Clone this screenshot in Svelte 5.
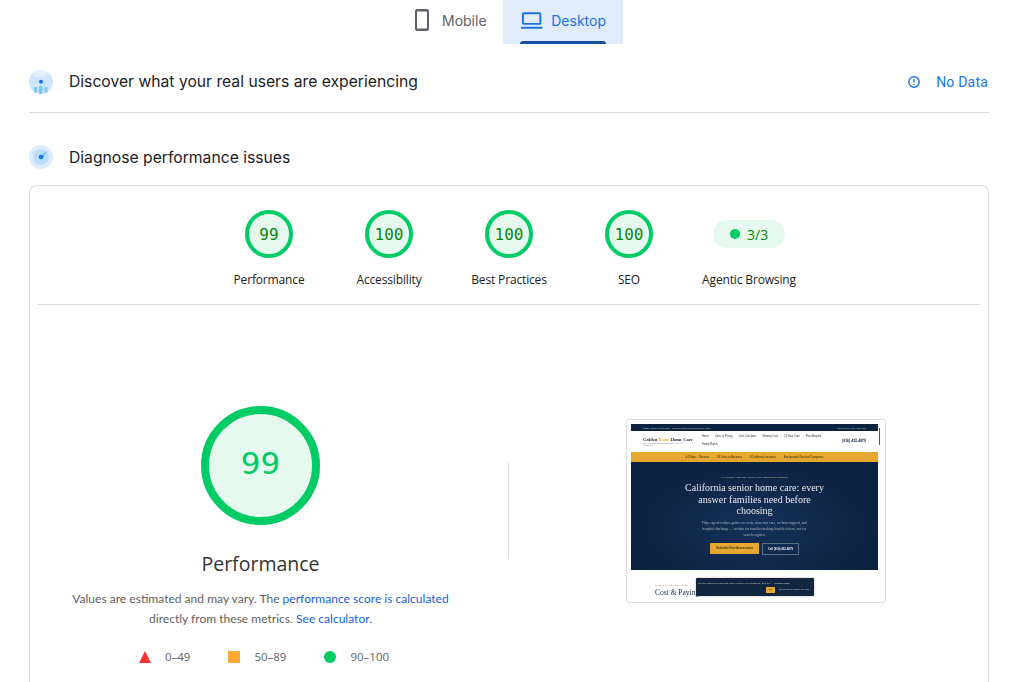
<script>
  const scores = [
    { label: 'Performance', value: '99' },
    { label: 'Accessibility', value: '100' },
    { label: 'Best Practices', value: '100' },
    { label: 'SEO', value: '100' }
  ];
  const navLinks = ['Home', 'Costs & Pricing', 'Cost Calculator', 'Memory Care', '24 Hour Care', 'Post-Hospital', 'Family Rights'];
  const trust = ['4.9 Stars · Reviews', '18 Years in Business', '8 California Locations', 'Background Checked Caregivers'];
</script>

<main class="page">
  <nav class="tabs">
    <div class="tab">
      <svg width="24" height="24" viewBox="0 0 24 24" fill="#5f6368"><path d="M7 1h10a2 2 0 0 1 2 2v18a2 2 0 0 1-2 2H7a2 2 0 0 1-2-2V3a2 2 0 0 1 2-2zm0 2.500v17h10v-17H7z" /></svg>
      <span>Mobile</span>
    </div>
    <div class="tab active">
      <svg width="24" height="24" viewBox="0 0 24 24" fill="#1a73e8"><path d="M4 4h16a2 2 0 0 1 2 2v9a2 2 0 0 1-2 2H4a2 2 0 0 1-2-2V6a2 2 0 0 1 2-2zm0 2v9h16V6H4zM1 19h22v2H1z" /></svg>
      <span>Desktop</span>
    </div>
  </nav>

  <section class="head first">
    <svg class="head-icon" width="24" height="24" viewBox="0 0 24 24">
      <circle cx="12" cy="12" r="12" fill="#cfe4fd" />
      <path d="M4 5a12 12 0 0 1 9-5 12 12 0 0 1 7 3.500c-3 0-4 3-8 3-3 0-4 2-8-1.500z" fill="#e6f1fe" />
      <circle cx="12" cy="11.700" r="2" fill="#1a73e8" />
      <rect x="5" y="17" width="3" height="5.500" rx="1" fill="#7cc8fa" />
      <rect x="10" y="16" width="3.500" height="8" rx="1" fill="#7cc8fa" />
      <rect x="15.500" y="17" width="3" height="5.500" rx="1" fill="#7cc8fa" />
    </svg>
    <h2>Discover what your real users are experiencing</h2>
    <div class="no-data">
      <svg width="14" height="14" viewBox="0 0 14 14" fill="none" stroke="#1a73e8" stroke-width="1.4">
        <circle cx="7" cy="7" r="5.200" />
        <path d="M7 4v3.600M7 9v1.200" />
      </svg>
      <span>No Data</span>
    </div>
  </section>

  <section class="head second">
    <svg class="head-icon" width="24" height="24" viewBox="0 0 24 24">
      <circle cx="12" cy="12" r="12" fill="#deedfe" />
      <circle cx="12" cy="12" r="8" fill="#bcdcfe" />
      <path d="M12 14.800 9.500 12 18.500 5.500 14.800 13z" fill="#86c2fb" />
      <circle cx="12" cy="12" r="2.300" fill="#1a73e8" />
    </svg>
    <h2>Diagnose performance issues</h2>
  </section>

  <section class="card">
    <div class="scores">
      {#each scores as s}
        <div class="score">
          <div class="ring">{s.value}</div>
          <span class="score-label">{s.label}</span>
        </div>
      {/each}
      <div class="score">
        <div class="pill-wrap">
          <div class="pill"><i></i>3/3</div>
        </div>
        <span class="score-label">Agentic Browsing</span>
      </div>
    </div>

    <div class="detail">
      <div class="summary">
        <div class="big-ring"><span>99</span></div>
        <h3>Performance</h3>
        <p>Values are estimated and may vary. The <a href="#calc">performance score is calculated</a> directly from these metrics. <a href="#calc">See calculator.</a></p>
        <div class="legend">
          <div class="legend-item">
            <svg width="12" height="12" viewBox="0 0 12 12"><path d="M6 0l6 12H0z" fill="#ff3333" /></svg>
            <span>0–49</span>
          </div>
          <div class="legend-item">
            <span class="sq"></span>
            <span>50–89</span>
          </div>
          <div class="legend-item">
            <span class="dot"></span>
            <span>90–100</span>
          </div>
        </div>
      </div>

      <div class="rule"></div>

      <div class="shot-col">
        <div class="shot">
          <div class="site">
            <div class="site-top"><span>Family Owned &amp; Operated · Serving California Seniors Since 2006</span><span>Call us free: (916) 432-4879</span></div>
            <div class="site-nav">
              <div class="brand">
                <b>Golden <em>Years</em> Home Care</b>
                <small>Non-medical senior home care across California</small>
              </div>
              <div class="links">
                {#each navLinks as l}<span>{l}</span>{/each}
              </div>
              <div class="phone"><small>Talk to a care advisor</small><b>(916) 432-4879</b></div>
            </div>
            <div class="site-trust">
              {#each trust as t}<span>{t}</span>{/each}
            </div>
            <div class="site-hero">
              <div class="eyebrow">CALIFORNIA SENIOR HOME CARE RESOURCE CENTER</div>
              <div class="title">California senior home care: every answer families need before choosing</div>
              <div class="sub">Fifty expert-written guides on costs, dementia care, no-hour support, and hospital discharge — written for families making hard decisions, not for search engines.</div>
              <div class="cta">
                <span class="cta-main">Schedule Free Assessment</span>
                <span class="cta-alt">Call (916) 432-4879</span>
              </div>
            </div>
            <div class="site-next">
              <div class="next-eyebrow">COST &amp; PAYING FOR CARE</div>
              <div class="next-title">Cost &amp; Paying for Care</div>
            </div>
            <div class="cookie">
              <div class="cookie-text">We use cookies for analytics and to improve our website(s). See our <u>Privacy Policy</u></div>
              <div class="cookie-btns"><span class="ok">OK</span><span class="nosell">Do not Sell or Share My Info</span></div>
            </div>
            <div class="scroll"></div>
          </div>
        </div>
      </div>
    </div>
  </section>
</main>

<style>
  :global(body) {
    margin: 0;
    background: #fff;
    overflow: hidden;
  }

  .page {
    width: 960px;
    height: 682px;
    margin: 0 0 0 29px;
    overflow: hidden;
    font-family: "Open Sans", "Liberation Sans", sans-serif;
    color: #202124;
  }

  .tabs {
    display: flex;
    justify-content: center;
    height: 44px;
    margin-left: 8px;
  }

  .tab {
    display: flex;
    align-items: center;
    gap: 8px;
    width: 100px;
    box-sizing: border-box;
    padding: 0 7px 4px;
    font: 400 14px Inter, sans-serif;
    color: #5f6368;
  }

  .tab.active {
    position: relative;
    width: 120px;
    padding: 0 17px 4px;
    background: #e1ecfb;
    color: #1a73e8;
  }

  .tab.active::after {
    content: "";
    position: absolute;
    left: 17px;
    right: 17px;
    bottom: 0;
    height: 3px;
    border-radius: 3px 3px 0 0;
    background: #174ea6;
  }

  .head {
    display: flex;
    align-items: center;
    gap: 16px;
  }

  .head.first {
    height: 59px;
    padding: 8px 0 1px;
    border-bottom: 1px solid #dadce0;
    box-sizing: content-box;
  }

  .head.second {
    height: 72px;
    padding-top: 16px;
    box-sizing: border-box;
  }

  .head-icon {
    flex: none;
  }

  h2 {
    margin: 0;
    font: 400 15.7px Inter, sans-serif;
    color: #202124;
  }

  .no-data {
    margin-left: auto;
    margin-right: 1px;
    display: flex;
    align-items: center;
    gap: 15px;
    font: 400 14px Roboto, sans-serif;
    letter-spacing: 0.2px;
    color: #1a73e8;
  }

  .card {
    height: 497px;
    box-sizing: border-box;
    padding: 0 8px;
    border: 1px solid #dadce0;
    border-bottom: none;
    border-radius: 8px 8px 0 0;
  }

  .scores {
    display: flex;
    justify-content: center;
    height: 119px;
    box-sizing: border-box;
    padding-top: 24px;
    border-bottom: 1px solid #dadce0;
  }

  .score {
    width: 120px;
    display: flex;
    flex-direction: column;
    align-items: center;
  }

  .ring {
    width: 48px;
    height: 48px;
    box-sizing: border-box;
    border: 4px solid #00cc66;
    border-radius: 50%;
    background: #e5f9ef;
    display: flex;
    align-items: center;
    justify-content: center;
    font: 16px "DejaVu Sans Mono", "Liberation Mono", monospace;
    color: #0a8a0a;
  }

  .pill-wrap {
    height: 48px;
    display: flex;
    align-items: center;
  }

  .pill {
    display: flex;
    align-items: center;
    gap: 7px;
    width: 72px;
    height: 28px;
    box-sizing: border-box;
    padding-left: 17px;
    border-radius: 14px;
    background: #e5f9ef;
    font: 14px "Open Sans", sans-serif;
    color: #0a8a0a;
  }

  .pill i {
    width: 10px;
    height: 10px;
    border-radius: 50%;
    background: #00cc66;
  }

  .score-label {
    margin-top: 12px;
    font: 500 12px "Open Sans", sans-serif;
    letter-spacing: -0.15px;
    line-height: 20px;
    color: #202124;
  }

  .detail {
    display: flex;
    align-items: flex-start;
  }

  .summary {
    flex: none;
    width: 445px;
    display: flex;
    flex-direction: column;
    align-items: center;
    padding-top: 101px;
  }

  .big-ring {
    width: 119px;
    height: 119px;
    box-sizing: border-box;
    border: 8px solid #00cc66;
    border-radius: 50%;
    background: #e5f9ef;
    display: flex;
    align-items: center;
    justify-content: center;
    font: 31px "DejaVu Sans", sans-serif;
    color: #00cc66;
  }

  .big-ring span {
    padding-bottom: 5px;
  }

  h3 {
    margin: 25px 0 0;
    font: 400 19.5px "Open Sans", sans-serif;
    line-height: 28px;
    color: #333;
  }

  p {
    width: 400px;
    margin: 11px 0 0;
    text-align: center;
    font: 12.05px/20px Lato, sans-serif;
    color: #5f5f5f;
  }

  a {
    color: #1a5fdc;
    text-decoration: none;
  }

  .legend {
    display: flex;
    gap: 38px;
    margin: 18px 0 0 7px;
    font: 11.5px "Open Sans", sans-serif;
    color: #5f6368;
  }

  .legend-item {
    display: flex;
    align-items: center;
    gap: 14px;
    line-height: 20px;
  }

  .sq {
    width: 12px;
    height: 12px;
    background: #ffa933;
  }

  .dot {
    width: 12px;
    height: 12px;
    border-radius: 50%;
    background: #00cc66;
  }

  .rule {
    flex: none;
    width: 1px;
    height: 96px;
    margin: 158px 0 0 25px;
    background: #dadce0;
  }

  .shot-col {
    flex: none;
    margin: 114px 0 0 117px;
  }

  .shot {
    width: 260px;
    height: 184px;
    box-sizing: border-box;
    padding: 4px;
    border: 1px solid #dadce0;
    border-radius: 3px;
    background: #fff;
  }

  .site {
    position: relative;
    height: 100%;
    box-sizing: border-box;
    padding-right: 3px;
    overflow: hidden;
    font-family: "Liberation Sans", sans-serif;
    color: #333;
    filter: blur(0.25px);
  }

  .site-top {
    height: 7px;
    background: #0d2240;
    display: flex;
    justify-content: space-between;
    align-items: center;
    padding: 0 12px;
    font-size: 2.3px;
    color: #c9cfd8;
  }

  .site-nav {
    height: 21px;
    box-sizing: border-box;
    display: flex;
    align-items: flex-start;
    padding: 4px 12px 0;
    font-size: 2.6px;
  }

  .brand {
    width: 59px;
    padding-top: 2px;
    display: flex;
    flex-direction: column;
  }

  .brand b {
    font: 700 4.6px "Liberation Serif", serif;
    white-space: nowrap;
    color: #12263f;
  }

  .brand em {
    font-style: normal;
    color: #e5a72f;
  }

  .brand small {
    width: 46px;
    font-size: 2.3px;
    color: #888;
  }

  .links {
    width: 122px;
    display: flex;
    flex-wrap: wrap;
    gap: 5px 6px;
    color: #333;
  }

  .phone {
    margin-left: auto;
    padding-top: 2px;
    text-align: right;
    display: flex;
    flex-direction: column;
  }

  .phone small {
    font-size: 2.3px;
    color: #999;
  }

  .phone b {
    font-size: 3.5px;
    color: #12263f;
  }

  .site-trust {
    height: 10px;
    background: #e5a72f;
    display: flex;
    justify-content: center;
    align-items: center;
    gap: 8px;
    font-size: 2.7px;
    color: #3a2d10;
  }

  .site-hero {
    height: 108px;
    box-sizing: border-box;
    padding-top: 14px;
    background: radial-gradient(ellipse at 50% 60%, #15305a, #0d2240 75%);
    display: flex;
    flex-direction: column;
    align-items: center;
    text-align: center;
  }

  .eyebrow {
    font-size: 2.2px;
    letter-spacing: 0.2px;
    color: #c7b98f;
  }

  .title {
    width: 146px;
    margin-top: 4px;
    font: 400 10px/11.5px "Liberation Serif", serif;
    color: #e8eaee;
  }

  .sub {
    width: 110px;
    margin-top: 3px;
    font: 3.6px/6px "Liberation Serif", serif;
    color: #aab3c2;
  }

  .cta {
    display: flex;
    gap: 3px;
    margin-top: 5px;
    font-size: 2.8px;
    font-weight: 700;
  }

  .cta-main {
    width: 49px;
    height: 11px;
    line-height: 11px;
    background: #e5a72f;
    color: #3a2d10;
  }

  .cta-alt {
    width: 35px;
    height: 10px;
    line-height: 10px;
    border: 0.5px solid #5a6a80;
    color: #e8eaee;
  }

  .site-next {
    padding: 14px 0 0 24px;
  }

  .next-eyebrow {
    font-size: 2.2px;
    letter-spacing: 0.2px;
    color: #b98c2b;
  }

  .next-title {
    margin-top: 2px;
    font: 7.5px "Liberation Serif", serif;
    color: #12263f;
    white-space: nowrap;
  }

  .cookie {
    position: absolute;
    left: 65px;
    top: 154px;
    width: 118px;
    height: 18px;
    padding: 3.5px 2px 0;
    box-sizing: border-box;
    border-radius: 1px;
    background: #12263f;
    box-shadow: 0 0 2px rgba(0, 0, 0, 0.4);
    font-size: 2.4px;
    color: #c9cfd8;
  }

  .cookie-text {
    white-space: nowrap;
  }

  .cookie u {
    margin-left: 4px;
    text-decoration: none;
    color: #e8eaee;
  }

  .cookie-btns {
    display: flex;
    justify-content: flex-end;
    align-items: center;
    gap: 4px;
    margin-top: 2px;
  }

  .ok {
    width: 9px;
    height: 6px;
    line-height: 6px;
    text-align: center;
    background: #e5a72f;
    color: #3a2d10;
  }

  .nosell {
    width: 33px;
    white-space: nowrap;
  }

  .scroll {
    position: absolute;
    right: 1px;
    top: 4px;
    width: 1.5px;
    height: 17px;
    background: #555;
  }
</style>
